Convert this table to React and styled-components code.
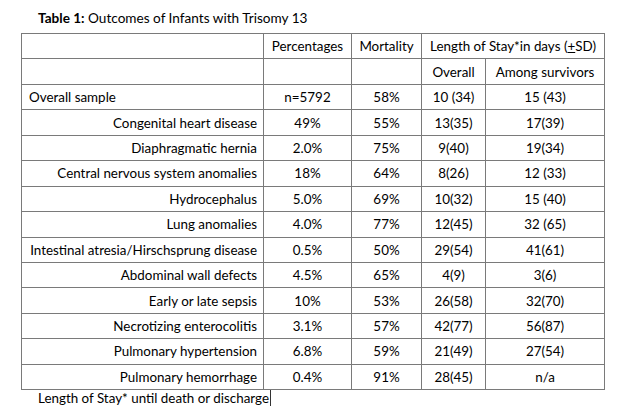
import React from "react";
import styled, { createGlobalStyle } from "styled-components";

const Global = createGlobalStyle`
  html, body { margin: 0; padding: 0; background: #fff; }
  body { font-family: Lato, "Open Sans", sans-serif; color: #000; }
`;

const Page = styled.div`
  width: 626px;
  height: 414px;
  padding: 10px 0 0 21px;
  box-sizing: border-box;
  display: flex;
  flex-direction: column;
`;

const Title = styled.div`
  font-size: 13.6px;
  line-height: 16px;
  margin: 0 0 7px 17px;
  b { font-weight: 700; }
`;

const Table = styled.table`
  border-collapse: collapse;
  table-layout: fixed;
  width: 583px;
  font-size: 13.4px;
`;

const Cell = styled.td`
  border: 1px solid #7a7a7a;
  height: 24.45px;
  padding: 0;
  padding-left: ${(p) => (p.$align === "left" ? "7px" : "0")};
  padding-right: ${(p) => (p.$align === "right" ? "6px" : "0")};
  text-align: ${(p) => p.$align || "center"};
  vertical-align: middle;
  white-space: nowrap;
  line-height: 16px;
`;

const Under = styled.span`
  text-decoration: underline;
`;

const Footer = styled.div`
  font-size: 13.4px;
  line-height: 16px;
  margin: 0 0 0 17px;
  display: flex;
  align-items: center;
`;

const Caret = styled.span`
  display: inline-block;
  width: 1px;
  height: 16px;
  background: #333;
  margin-left: 1px;
`;

const rows = [
  ["Congenital heart disease", "49%", "55%", "13(35)", "17(39)"],
  ["Diaphragmatic hernia", "2.0%", "75%", "9(40)", "19(34)"],
  ["Central nervous system anomalies", "18%", "64%", "8(26)", "12 (33)"],
  ["Hydrocephalus", "5.0%", "69%", "10(32)", "15 (40)"],
  ["Lung anomalies", "4.0%", "77%", "12(45)", "32 (65)"],
  ["Intestinal atresia/Hirschsprung disease", "0.5%", "50%", "29(54)", "41(61)"],
  ["Abdominal wall defects", "4.5%", "65%", "4(9)", "3(6)"],
  ["Early or late sepsis", "10%", "53%", "26(58)", "32(70)"],
  ["Necrotizing enterocolitis", "3.1%", "57%", "42(77)", "56(87)"],
  ["Pulmonary hypertension", "6.8%", "59%", "21(49)", "27(54)"],
  ["Pulmonary hemorrhage", "0.4%", "91%", "28(45)", "n/a"],
];

export default function App() {
  return (
    <>
      <Global />
      <Page>
        <Title>
          <b>Table 1:</b> Outcomes of Infants with Trisomy 13
        </Title>
        <Table>
          <colgroup>
            <col style={{ width: 242 }} />
            <col style={{ width: 88 }} />
            <col style={{ width: 70 }} />
            <col style={{ width: 64 }} />
            <col style={{ width: 119 }} />
          </colgroup>
          <tbody>
            <tr>
              <Cell />
              <Cell>Percentages</Cell>
              <Cell>Mortality</Cell>
              <Cell colSpan={2}>
                Length of Stay*in days (<Under>+</Under>SD)
              </Cell>
            </tr>
            <tr>
              <Cell />
              <Cell />
              <Cell />
              <Cell>Overall</Cell>
              <Cell>Among survivors</Cell>
            </tr>
            <tr>
              <Cell $align="left">Overall sample</Cell>
              <Cell>n=5792</Cell>
              <Cell>58%</Cell>
              <Cell>10 (34)</Cell>
              <Cell>15 (43)</Cell>
            </tr>
            {rows.map((r) => (
              <tr key={r[0]}>
                <Cell $align="right">{r[0]}</Cell>
                <Cell>{r[1]}</Cell>
                <Cell>{r[2]}</Cell>
                <Cell>{r[3]}</Cell>
                <Cell>{r[4]}</Cell>
              </tr>
            ))}
          </tbody>
        </Table>
        <Footer>
          Length of Stay* until death or discharge
          <Caret />
        </Footer>
      </Page>
    </>
  );
}
